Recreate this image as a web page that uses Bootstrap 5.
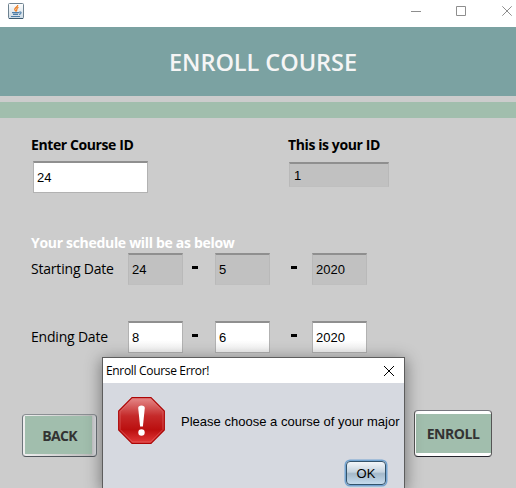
<!DOCTYPE html>
<html lang="en">
<head>
<meta charset="utf-8">
<meta name="viewport" content="width=device-width, initial-scale=1">
<title>Enroll Course</title>
<link href="https://cdn.jsdelivr.net/npm/bootstrap@5.3.0/dist/css/bootstrap.min.css" rel="stylesheet">
<style>
body{width:516px;height:488px;background:#ccc;font-family:"Open Sans",sans-serif;color:#000;line-height:1}
.window-bar{height:27px;padding:3px 2px 0 8px}
.window-bar .controls{margin-top:2px}
.banner{height:69px;background:#7ba2a2;padding:2px 0 0 10px}
.banner h1{font-size:23.5px;font-weight:600;color:#f5f5f5;letter-spacing:-.05px;white-space:nowrap}
.stripe{height:16px;margin-top:6px;background:#a1bead}
.caption{font-size:14px;font-weight:700;letter-spacing:-.4px;line-height:18px;white-space:nowrap}
.ids{height:118px;padding:18px 0 0 31px}
.ids .left{width:257px}
.swing{font-family:"Liberation Sans",Arial,sans-serif;font-size:13px;border:1px solid #b2b2b2;border-top:2px solid #8f8f8f;border-radius:0;background:#fff;color:#000;padding:0 0 0 3px;line-height:1;outline:0;display:block}
.swing[readonly]{background:#c1c1c1;border-color:#8f8f8f #b9b9b9 #bfbfbf}
.course{width:115px;height:32px;margin:7px 0 0 2px}
.own{width:100px;height:25px;margin:8px 0 0 1px}
.own.swing{padding-left:4px}
.note{height:17px;padding-left:31px;color:#fff}
.note .caption{letter-spacing:-.31px;line-height:13px}
.dates{height:32px;padding-left:31px}
.dates .name{width:97px;font-size:14px;letter-spacing:-.2px}
.day{width:55px;height:32px}
.dates .swing:not([readonly]){background:linear-gradient(#fff 60%,#f0f0f0)}
.dash{height:3px;width:6px;background:#000;margin-bottom:3px}
.d1{margin-left:9px;margin-right:17px}
.d2{margin-left:21px;margin-right:15px}
.ending{margin-top:36px}
.actions{margin-top:57px;padding:0 24px 0 22px}
.metal{border:1px solid #666c72;border-radius:4px;background:#a1bead;color:#333;font-size:14px;font-weight:700;padding:0;line-height:1}
.back{width:75px;height:43px;margin-top:4px;letter-spacing:-.65px;border-color:#8b8f93 #6e757b #50565c;background:linear-gradient(#a1bead,#a1bead) 2px 1px/67px 38px no-repeat,linear-gradient(90deg,#eee,#bbb 93%,#e4e7eb)}
.enroll{width:78px;height:47px;letter-spacing:-.45px;border-color:#77777f #555 #25252d;background:linear-gradient(#a1bead,#a1bead) 1px 3px/75px 39px no-repeat,#fff}
.message{position:absolute;left:102px;top:357px;width:303px;height:131px;overflow:visible;border:1px solid #5d5d5d;border-bottom:0;background:#d6d9e0;box-shadow:0 3px 15px 1px rgba(0,0,0,.42)}
.message-title{height:25px;background:#fff;padding:0 9px 0 3px;font-size:12px;letter-spacing:-.33px}
.message-body{height:74px;padding:0 0 0 15px;font-family:"Liberation Sans",Arial,sans-serif;font-size:13px}
.message-body p{margin:2px 0 0 16px;white-space:nowrap;letter-spacing:.01px}
.ok{width:40px;height:24px;margin:4px 18px 0 0;font-family:"Liberation Sans",Arial,sans-serif;font-size:13px;border:1px solid #33536b;border-radius:4px;box-shadow:0 0 0 1.5px #73a4d1;background:linear-gradient(#f3f6f9,#c5d3df 45%,#a4b9ca 53%,#c5dbed);color:#000;padding:0}
</style>
<script src="https://cdn.jsdelivr.net/npm/bootstrap@5.3.0/dist/js/bootstrap.bundle.min.js"></script>
</head>
<body class="overflow-hidden position-relative">
<div class="window-bar bg-white d-flex justify-content-between">
<svg width="16" height="16" viewBox="0 0 16 16"><defs><linearGradient id="tile" x2="0" y2="1"><stop stop-color="#fff"/><stop offset="1" stop-color="#cbd9e4"/></linearGradient></defs><rect x=".5" y=".5" width="15" height="15" rx="1" fill="url(#tile)" stroke="#6e8290"/><path d="M1 15.5h14" stroke="#3b5a70"/><path d="M9.8 2C10 4 5.5 5 7 7.2L8 8.5M10.5 4.3C7.5 5.5 9.7 6.5 8.2 8.3" fill="none" stroke="#ee7d20" stroke-width="1.2"/><path d="M4 9.6h7M5 11.4h5M3 13.5h9M11 9.2c3-.9 2.6 1.8 0 2.2" fill="none" stroke="#4e7ea8" stroke-width="1.1"/></svg>
<svg class="controls" width="104" height="14" viewBox="0 0 104 14" fill="none" stroke="#8e8e8e"><path d="M-3 6.5"/><path d="M1 6.5h10"/><path d="M46.5 1.5h9v9h-9z"/><path d="M92.3 1.3l9.4 9.4m0-9.4l-9.4 9.4"/></svg>
</div>
<header class="banner d-flex align-items-center justify-content-center"><h1 class="m-0">ENROLL COURSE</h1></header>
<div class="stripe"></div>
<main>
<section class="ids d-flex">
<div class="left"><label class="caption d-block" for="course">Enter Course ID</label><input class="swing course" id="course" value="24"></div>
<div><label class="caption d-block" for="own">This is your ID</label><input class="swing own" id="own" value="1" readonly></div>
</section>
<div class="note"><div class="caption">Your schedule will be as below</div></div>
<section class="dates d-flex align-items-center"><span class="name">Starting Date</span><input class="swing day" value="24" readonly><i class="dash d1"></i><input class="swing day" value="5" readonly><i class="dash d2"></i><input class="swing day" value="2020" readonly></section>
<section class="dates ending d-flex align-items-center"><span class="name">Ending Date</span><input class="swing day" value="8"><i class="dash d1"></i><input class="swing day" value="6"><i class="dash d2"></i><input class="swing day" value="2020"></section>
<div class="actions d-flex justify-content-between"><button class="metal back">BACK</button><button class="metal enroll">ENROLL</button></div>
</main>
<div class="message" role="dialog">
<div class="message-title d-flex align-items-center justify-content-between"><span>Enroll Course Error!</span><svg width="12" height="12" viewBox="0 0 12 12" stroke="#000"><path d="M1 1l10 10M11 1L1 11"/></svg></div>
<div class="message-body d-flex align-items-center">
<svg width="47" height="47" viewBox="0 0 47 47"><defs><linearGradient id="alert" x2="0" y2="1"><stop stop-color="#e58a8a"/><stop offset=".4" stop-color="#c52a2a"/><stop offset=".7" stop-color="#bb0f0f"/><stop offset="1" stop-color="#e33a3a"/></linearGradient></defs><path d="M14 .7h19L46.3 14v19L33 46.3H14L.7 33V14z" fill="url(#alert)" stroke="#ac0505" stroke-width="1.2"/><path d="M14.5 2h18L45 14.5v18L32.5 45h-18L2 32.5v-18z" fill="none" stroke="#e87474" stroke-opacity=".55"/><path d="M20.2 11q0-2.6 3.3-2.6t3.3 2.6l-1.9 18.5h-2.8z" fill="#fff"/><circle cx="23.5" cy="35.5" r="3.2" fill="#fff"/></svg>
<p>Please choose a course of your major</p></div>
<div class="d-flex justify-content-end"><button class="ok">OK</button></div>
</div>
</body>
</html>
